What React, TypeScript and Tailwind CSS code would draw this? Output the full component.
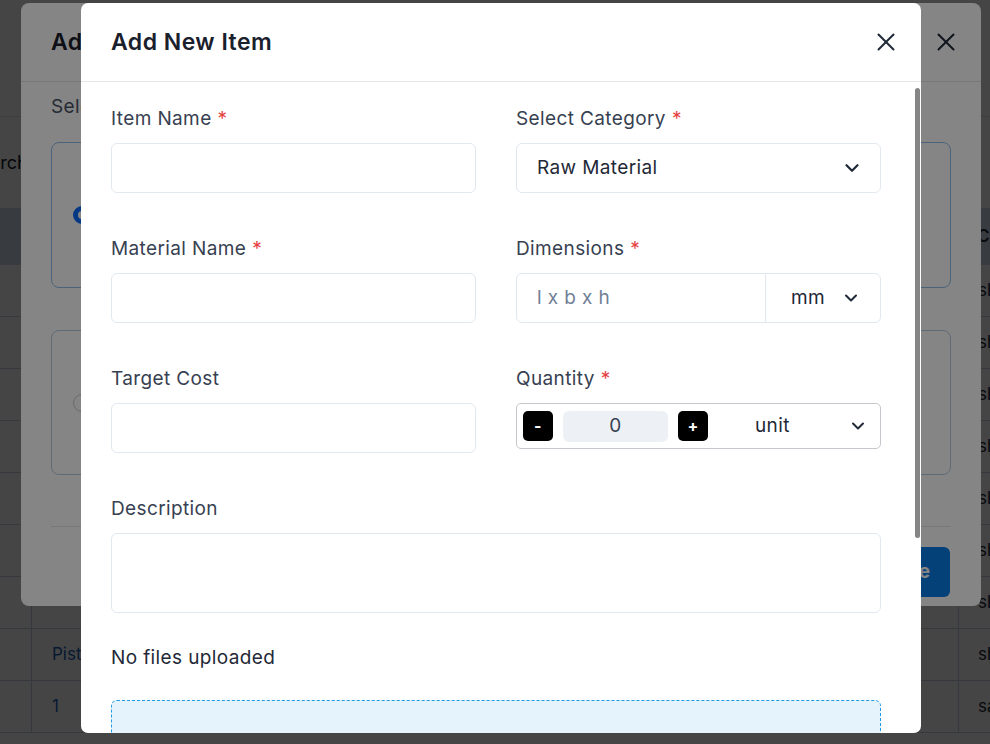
import { X, ChevronDown } from "lucide-react";

const rows = [
  ["Bearing Housing", "BH-204", "Raw Material", "shubham"],
  ["Gear Shaft", "GS-118", "Finished Good", "shubham"],
  ["Valve Body", "VB-310", "Raw Material", "shubham"],
  ["Flange Plate", "FP-077", "Raw Material", "shubham"],
  ["Bush Sleeve", "BS-045", "Finished Good", "shubham"],
  ["Spring Clip", "SC-009", "Raw Material", "shubham"],
  ["", "PH-221", "Raw Material", "shubham"],
  ["Piston Rod", "PR-112", "Finished Good", "shubham"],
  ["1", "TEST-01", "Raw Material", "sachin"],
];

function Label({ text, required }: { text: string; required?: boolean }) {
  return (
    <label className="block h-[24px] text-[19px] leading-[24px] tracking-[0.02em] text-[#374151]">
      {text}
      {required && <span className="ml-[6px] text-[#e53e3e]">*</span>}
    </label>
  );
}

function BackgroundPage() {
  return (
    <div className="flex h-full flex-col bg-white">
      <div className="h-[117px] shrink-0 border-b border-[#d9e2ec]" />
      <div className="-ml-[32px] pt-[34px] text-[18px] leading-[24px] text-[#111827]">Search</div>
      <div className="-ml-[29px] mt-[33px] text-[17px] text-[#1f2937]">
        <div className="grid h-[57px] grid-cols-[60px_215px_176px_301px_235px_200px] items-center bg-[#cddff0] font-semibold">
          <div />
          <div className="px-[20px]">Item Name</div>
          <div className="px-[20px]">Code</div>
          <div className="px-[20px]">Category</div>
          <div className="px-[20px]">Type</div>
          <div className="px-[19px]">Created By</div>
        </div>
        {rows.map((r, i) => (
          <div
            key={i}
            className="grid h-[52px] grid-cols-[60px_215px_176px_301px_235px_200px] items-center border-b border-[#c4d3e2]"
          >
            <div />
            <div className="flex h-full items-center border-l border-[#c4d3e2] px-[20px] text-[#1d5fb8]">{r[0]}</div>
            <div className="flex h-full items-center border-l border-[#c4d3e2] px-[20px]">{r[1]}</div>
            <div className="flex h-full items-center border-l border-[#c4d3e2] px-[20px]">{r[2]}</div>
            <div className="flex h-full items-center border-l border-[#c4d3e2] px-[20px]">{r[2]}</div>
            <div className="flex h-full items-center border-l border-[#c4d3e2] px-[19px]">{r[3]}</div>
          </div>
        ))}
      </div>
    </div>
  );
}

function TypeModal() {
  return (
    <div className="absolute left-[21px] top-[3px] flex h-[603px] w-[960px] flex-col rounded-[8px] bg-white">
      <div className="flex h-[79px] shrink-0 items-center justify-between border-b border-[#e5e7eb] pl-[30px] pr-[20px]">
        <h2 className="text-[23px] font-semibold tracking-[0.02em] text-[#1a202c]">Add Item</h2>
        <X size={30} strokeWidth={1.6} className="text-[#1f2937]" />
      </div>
      <div className="flex flex-col px-[30px] pt-[13px]">
        <p className="text-[19px] leading-[24px] tracking-[0.02em] text-[#4a5568]">Select Item Type</p>
        <div className="mt-[23px] flex h-[146px] items-center gap-[16px] rounded-[8px] border border-[#8fbdea] px-[21px]">
          <span className="h-[18px] w-[18px] rounded-full border-[5px] border-[#0d6efd] bg-white" />
          <span className="text-[19px] text-[#1f2937]">Single Item</span>
        </div>
        <div className="mt-[42px] flex h-[145px] items-center gap-[16px] rounded-[8px] border border-[#b6cde2] px-[21px]">
          <span className="h-[18px] w-[18px] rounded-full border border-[#c5ccd4] bg-white" />
          <span className="text-[19px] text-[#1f2937]">Bulk Upload</span>
        </div>
        <div className="mt-[51px] border-t border-[#e5e7eb]" />
        <div className="flex justify-end pr-[1px] pt-[20px]">
          <button className="h-[50px] rounded-[6px] bg-[#0a7ee8] px-[20px] text-[19px] font-bold text-white">
            Continue
          </button>
        </div>
      </div>
    </div>
  );
}

function ItemModal() {
  return (
    <div className="absolute left-[81px] top-[3px] flex h-[730px] w-[840px] flex-col overflow-hidden rounded-[7px] bg-white">
      <div className="flex h-[79px] shrink-0 items-center justify-between border-b border-[#e5e7eb] pl-[30px] pr-[20px]">
        <h2 className="text-[23px] font-semibold tracking-[0.02em] text-[#1a202c]">Add New Item</h2>
        <X size={30} strokeWidth={1.6} className="text-[#1f2937]" />
      </div>

      <div className="relative flex-1 overflow-hidden">
        <div className="pl-[30px] pr-[40px] pt-[25px] text-[19px] tracking-[0.02em]">
          <div className="grid grid-cols-2 gap-x-[40px] gap-y-[44px]">
            <div>
              <Label text="Item Name" required />
              <input className="mt-[12px] block h-[50px] w-full rounded-[6px] border border-[#e2e8f0] px-[20px] outline-none" />
            </div>
            <div>
              <Label text="Select Category" required />
              <div className="mt-[12px] flex h-[50px] items-center justify-between rounded-[6px] border border-[#e2e8f0] pl-[20px] pr-[17px] text-[#1f2937]">
                <span>Raw Material</span>
                <ChevronDown size={22} strokeWidth={2.4} />
              </div>
            </div>
            <div>
              <Label text="Material Name" required />
              <input className="mt-[12px] block h-[50px] w-full rounded-[6px] border border-[#e2e8f0] px-[20px] outline-none" />
            </div>
            <div>
              <Label text="Dimensions" required />
              <div className="mt-[12px] flex h-[50px] rounded-[6px] border border-[#e2e8f0]">
                <div className="flex w-[249px] items-center border-r border-[#e2e8f0] pl-[20px] tracking-[0.02em] text-[#718096]">
                  l x b x h
                </div>
                <div className="flex flex-1 items-center gap-[16px] pl-[25px] text-[#1f2937]">
                  <span>mm</span>
                  <ChevronDown size={20} strokeWidth={2.4} />
                </div>
              </div>
            </div>
            <div>
              <Label text="Target Cost" />
              <input className="mt-[12px] block h-[50px] w-full rounded-[6px] border border-[#e2e8f0] px-[20px] outline-none" />
            </div>
            <div>
              <Label text="Quantity" required />
              <div className="mt-[12px] flex h-[46px] items-center rounded-[5px] border border-[#c4c7cb] pl-[6px] pr-[12px] text-[#1f2937]">
                <button className="flex h-[30px] w-[30px] items-center justify-center rounded-[5px] bg-black text-[16px] font-bold text-white">
                  -
                </button>
                <div className="ml-[10px] flex h-[31px] w-[105px] items-center justify-center rounded-[6px] bg-[#edf1f5] text-[#374151]">
                  0
                </div>
                <button className="ml-[10px] flex h-[30px] w-[30px] items-center justify-center rounded-[5px] bg-black text-[16px] font-bold text-white">
                  +
                </button>
                <span className="ml-[47px] flex-1">unit</span>
                <ChevronDown size={20} strokeWidth={2.4} />
              </div>
            </div>
            <div className="col-span-2">
              <Label text="Description" />
              <textarea className="mt-[12px] block h-[80px] w-full resize-none rounded-[6px] border border-[#e2e8f0] px-[20px] py-[10px] outline-none" />
            </div>
          </div>

          <p className="mt-[33px] leading-[24px] text-[#1f2937]">No files uploaded</p>
          <div className="mt-[30px] h-[160px] rounded-[6px] border border-dashed border-[#1e9be6] bg-[#e5f3fc]" />
        </div>

        {/* scrollbar thumb */}
        <div className="absolute right-[1px] top-[6px] h-[450px] w-[5px] rounded-full bg-[#858585]" />
      </div>
    </div>
  );
}

export default function App() {
  return (
    <div className="relative h-[744px] w-[990px] overflow-hidden font-['Inter',sans-serif]">
      <BackgroundPage />
      <div className="absolute inset-0 bg-black/[0.48]" />
      <TypeModal />
      <div className="absolute inset-0 bg-black/[0.48]" />
      <ItemModal />
    </div>
  );
}
